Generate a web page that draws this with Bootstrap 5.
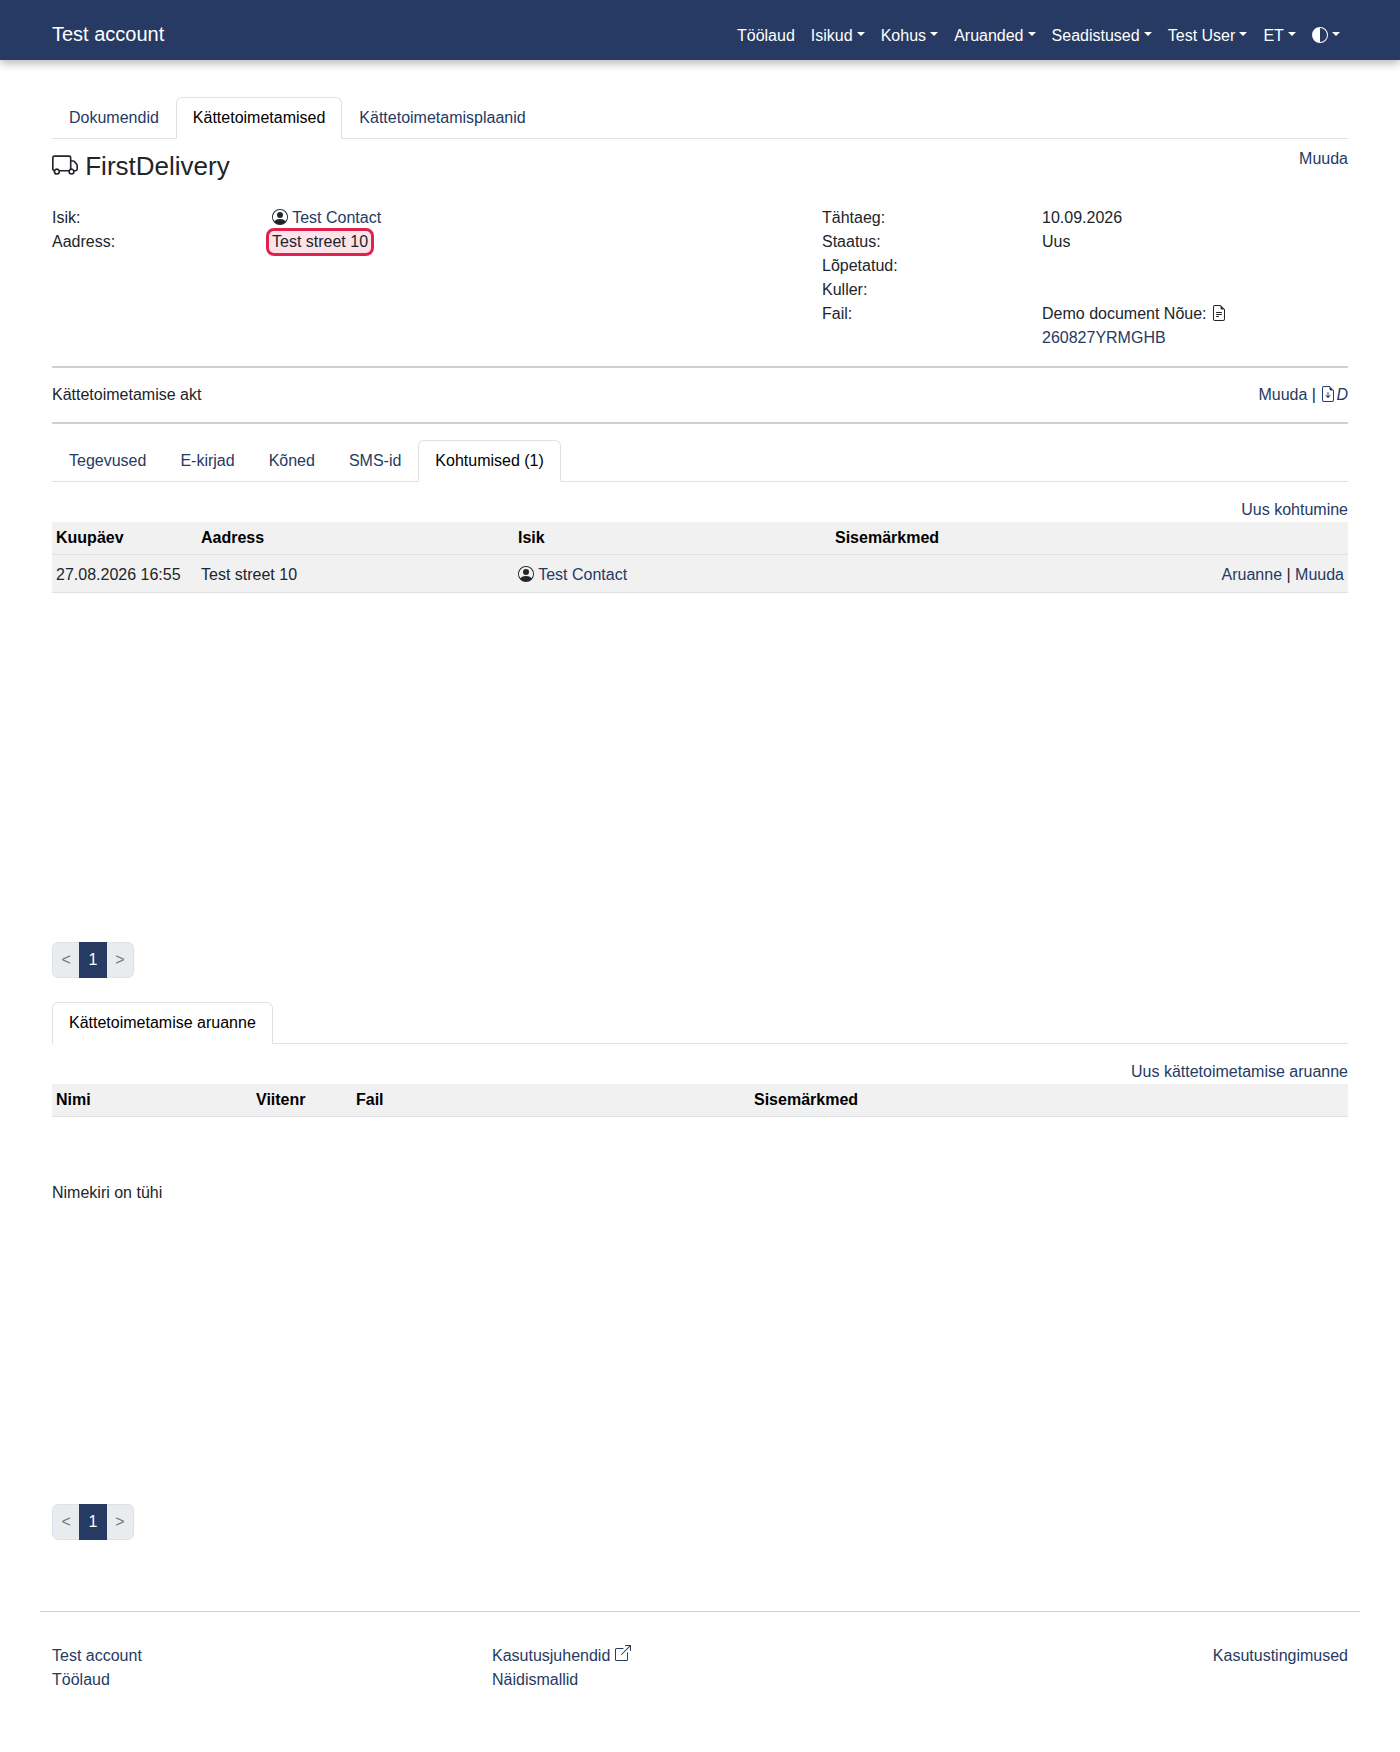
<!DOCTYPE html>
<html lang="et">
<head>
  <meta charset="UTF-8" />
  <meta name="viewport" content="width=device-width, initial-scale=1.0" />
  <title>FirstDelivery</title>
  <link href="https://cdn.jsdelivr.net/npm/bootstrap@5.3.0/dist/css/bootstrap.min.css" rel="stylesheet">
  <style>
    body {
      font-family: "Liberation Sans", Arial, sans-serif;
      font-size: 16px;
      color: #212529;
    }
    a { color: #263a63; text-decoration: none; }
    .top-nav {
      background-color: #263a63;
      height: 60px;
      padding: 0;
      box-shadow: 0 4px 8px rgba(0, 0, 0, .25);
    }
    .top-nav .container { padding-top: 7px; }
    .top-nav .navbar-brand { color: #fff; font-size: 20px; padding: 0; }
    .top-nav .nav-link { color: #fff; padding: 8px; line-height: 24px; }
    .top-nav .navbar-nav { margin-top: 4px; }
    .page-tabs { border-bottom-color: #dee2e6; }
    .page-tabs .nav-link { color: #263a63; padding: 8px 16px; }
    .page-tabs .nav-link.active { color: #000; }
    .first-tabs { margin-top: 37px; }
    .delivery-title { font-size: 26px; line-height: 34px; font-weight: 400; margin: 2px 0 0; }
    .delivery-head { height: 51px; padding-top: 8px; }
    .info-label { width: 220px; flex: none; }
    .info-row { display: flex; line-height: 24px; min-height: 24px; }
    .addr-mark {
      background: #fbe3e9;
      border: 3px solid #e0234e;
      border-radius: 8px;
      padding: 0 3px;
      margin-left: -6px;
      line-height: 22px;
      height: 28px;
      margin-top: -2px;
      margin-bottom: -2px;
    }
    .rule { border-top: 2px solid #cfcfcf; opacity: 1; margin: 0; }
    .act-row { height: 54px; }
    .data-grid { margin-bottom: 0; }
    .data-grid th, .data-grid td { padding: 4px; background: #f1f1f1; box-shadow: none; border-bottom: 1px solid #dee2e6; vertical-align: middle; }
    .data-grid th { height: 32px; color: #000; }
    .data-grid td { height: 38px; padding: 5px 4px 3px; }
    .list-holder { height: 420px; }
    .list-holder-empty { height: 387px; padding-top: 64px; }
    .action-line { height: 40px; padding-top: 16px; line-height: 24px; }
    .pager { margin: 0; }
    .pager .page-link { background: #e9ecef; color: #6c757d; padding: 6px 8.4px; line-height: 22px; border-color: #dee2e6; }
    .pager .page-item.active .page-link { background: #263a63; border-color: #263a63; color: #fff; }
    .foot-rule { border-top: 1px solid #cfcfcf; opacity: 1; margin: 71px 0 0; }
    .bi-icon { fill: currentColor; vertical-align: -.125em; }
    .bi-raised { vertical-align: 0; }
  </style>
</head>
<body>
  <nav class="navbar navbar-expand-lg top-nav">
    <div class="container">
      <a class="navbar-brand" href="#">Test account</a>
      <ul class="navbar-nav ms-auto flex-row">
        <li class="nav-item"><a class="nav-link" href="#">Töölaud</a></li>
        <li class="nav-item"><a class="nav-link dropdown-toggle" href="#">Isikud</a></li>
        <li class="nav-item"><a class="nav-link dropdown-toggle" href="#">Kohus</a></li>
        <li class="nav-item"><a class="nav-link dropdown-toggle" href="#">Aruanded</a></li>
        <li class="nav-item"><a class="nav-link dropdown-toggle" href="#">Seadistused</a></li>
        <li class="nav-item"><a class="nav-link dropdown-toggle" href="#">Test User</a></li>
        <li class="nav-item"><a class="nav-link dropdown-toggle" href="#">ET</a></li>
        <li class="nav-item">
          <a class="nav-link dropdown-toggle" href="#"><svg class="bi-icon" width="16" height="16" viewBox="0 0 16 16"><path d="M8 15A7 7 0 1 0 8 1v14zm0 1A8 8 0 1 1 8 0a8 8 0 0 1 0 16z"/></svg></a>
        </li>
      </ul>
    </div>
  </nav>

  <main class="container">
    <ul class="nav nav-tabs page-tabs first-tabs">
      <li class="nav-item"><a class="nav-link" href="#">Dokumendid</a></li>
      <li class="nav-item"><a class="nav-link active" href="#">Kättetoimetamised</a></li>
      <li class="nav-item"><a class="nav-link" href="#">Kättetoimetamisplaanid</a></li>
    </ul>

    <div class="d-flex justify-content-between delivery-head">
      <h1 class="delivery-title">
        <svg class="bi-icon" width="26" height="26" viewBox="0 0 16 16"><path d="M0 3.5A1.5 1.5 0 0 1 1.5 2h9A1.5 1.5 0 0 1 12 3.5V5h1.02a1.5 1.5 0 0 1 1.17.563l1.481 1.85a1.5 1.5 0 0 1 .329.938V10.5a1.5 1.5 0 0 1-1.5 1.5H14a2 2 0 1 1-4 0H5a2 2 0 1 1-3.998-.085A1.5 1.5 0 0 1 0 10.5v-7zm1.294 7.456A1.999 1.999 0 0 1 4.732 11h5.536a2.01 2.01 0 0 1 .732-.732V3.5a.5.5 0 0 0-.5-.5h-9a.5.5 0 0 0-.5.5v7a.5.5 0 0 0 .294.456zM12 10a2 2 0 0 1 1.732 1h.768a.5.5 0 0 0 .5-.5V8.35a.5.5 0 0 0-.11-.312l-1.48-1.85A.5.5 0 0 0 13.02 6H12v4zm-9 1a1 1 0 1 0 0 2 1 1 0 0 0 0-2zm9 0a1 1 0 1 0 0 2 1 1 0 0 0 0-2z"/></svg>
        FirstDelivery
      </h1>
      <a href="#">Muuda</a>
    </div>

    <div class="row mt-3 pb-3">
      <div class="col-7">
        <div class="info-row">
          <div class="info-label">Isik:</div>
          <div>
            <svg class="bi-icon" width="16" height="16" viewBox="0 0 16 16"><path d="M11 6a3 3 0 1 1-6 0 3 3 0 0 1 6 0z"/><path d="M0 8a8 8 0 1 1 16 0A8 8 0 0 1 0 8zm8-7a7 7 0 0 0-5.468 11.37C3.242 11.226 4.805 10 8 10s4.757 1.225 5.468 2.37A7 7 0 0 0 8 1z"/></svg>
            <a href="#">Test Contact</a>
          </div>
        </div>
        <div class="info-row">
          <div class="info-label">Aadress:</div>
          <div class="addr-mark">Test street 10</div>
        </div>
      </div>
      <div class="col-5">
        <div class="info-row"><div class="info-label">Tähtaeg:</div><div>10.09.2026</div></div>
        <div class="info-row"><div class="info-label">Staatus:</div><div>Uus</div></div>
        <div class="info-row"><div class="info-label">Lõpetatud:</div><div></div></div>
        <div class="info-row"><div class="info-label">Kuller:</div><div></div></div>
        <div class="info-row">
          <div class="info-label">Fail:</div>
          <div>
            Demo document Nõue:
            <svg class="bi-icon" width="16" height="16" viewBox="0 0 16 16"><path d="M5.5 7a.5.5 0 0 0 0 1h5a.5.5 0 0 0 0-1h-5zM5 9.5a.5.5 0 0 1 .5-.5h5a.5.5 0 0 1 0 1h-5a.5.5 0 0 1-.5-.5zm0 2a.5.5 0 0 1 .5-.5h2a.5.5 0 0 1 0 1h-2a.5.5 0 0 1-.5-.5z"/><path d="M9.5 0H4a2 2 0 0 0-2 2v12a2 2 0 0 0 2 2h8a2 2 0 0 0 2-2V4.5L9.5 0zm0 1v2A1.5 1.5 0 0 0 11 4.5h2V14a1 1 0 0 1-1 1H4a1 1 0 0 1-1-1V2a1 1 0 0 1 1-1h5.5z"/></svg>
            <br><a href="#">260827YRMGHB</a>
          </div>
        </div>
      </div>
    </div>

    <hr class="rule">
    <div class="d-flex justify-content-between align-items-center act-row">
      <span>Kättetoimetamise akt</span>
      <span>
        <a href="#">Muuda</a> |
        <a href="#"><svg class="bi-icon" width="16" height="16" viewBox="0 0 16 16"><path d="M8.5 6.5a.5.5 0 0 0-1 0v3.793L6.354 9.146a.5.5 0 1 0-.708.708l2 2a.5.5 0 0 0 .708 0l2-2a.5.5 0 0 0-.708-.708L8.5 10.293V6.5z"/><path d="M14 14V4.5L9.5 0H4a2 2 0 0 0-2 2v12a2 2 0 0 0 2 2h8a2 2 0 0 0 2-2zM9.5 3A1.5 1.5 0 0 0 11 4.5h2V14a1 1 0 0 1-1 1H4a1 1 0 0 1-1-1V2a1 1 0 0 1 1-1h5.5v2z"/></svg><em>D</em></a>
      </span>
    </div>
    <hr class="rule">

    <ul class="nav nav-tabs page-tabs mt-3">
      <li class="nav-item"><a class="nav-link" href="#">Tegevused</a></li>
      <li class="nav-item"><a class="nav-link" href="#">E-kirjad</a></li>
      <li class="nav-item"><a class="nav-link" href="#">Kõned</a></li>
      <li class="nav-item"><a class="nav-link" href="#">SMS-id</a></li>
      <li class="nav-item"><a class="nav-link active" href="#">Kohtumised (1)</a></li>
    </ul>
    <div class="text-end action-line"><a href="#">Uus kohtumine</a></div>

    <div class="list-holder">
      <table class="table data-grid">
        <thead>
          <tr>
            <th style="width: 145px">Kuupäev</th>
            <th style="width: 317px">Aadress</th>
            <th style="width: 317px">Isik</th>
            <th>Sisemärkmed</th>
            <th></th>
          </tr>
        </thead>
        <tbody>
          <tr>
            <td>27.08.2026 16:55</td>
            <td>Test street 10</td>
            <td>
              <svg class="bi-icon" width="16" height="16" viewBox="0 0 16 16"><path d="M11 6a3 3 0 1 1-6 0 3 3 0 0 1 6 0z"/><path d="M0 8a8 8 0 1 1 16 0A8 8 0 0 1 0 8zm8-7a7 7 0 0 0-5.468 11.37C3.242 11.226 4.805 10 8 10s4.757 1.225 5.468 2.37A7 7 0 0 0 8 1z"/></svg>
              <a href="#">Test Contact</a>
            </td>
            <td></td>
            <td class="text-end"><a href="#">Aruanne</a> | <a href="#">Muuda</a></td>
          </tr>
        </tbody>
      </table>
    </div>

    <ul class="pagination pager">
      <li class="page-item"><a class="page-link" href="#">&lt;</a></li>
      <li class="page-item active"><a class="page-link" href="#">1</a></li>
      <li class="page-item"><a class="page-link" href="#">&gt;</a></li>
    </ul>

    <ul class="nav nav-tabs page-tabs mt-4">
      <li class="nav-item"><a class="nav-link active" href="#">Kättetoimetamise aruanne</a></li>
    </ul>
    <div class="text-end action-line"><a href="#">Uus kättetoimetamise aruanne</a></div>

    <table class="table data-grid">
      <thead>
        <tr>
          <th style="width: 200px">Nimi</th>
          <th style="width: 100px">Viitenr</th>
          <th style="width: 398px">Fail</th>
          <th>Sisemärkmed</th>
        </tr>
      </thead>
    </table>
    <div class="list-holder-empty">Nimekiri on tühi</div>

    <ul class="pagination pager">
      <li class="page-item"><a class="page-link" href="#">&lt;</a></li>
      <li class="page-item active"><a class="page-link" href="#">1</a></li>
      <li class="page-item"><a class="page-link" href="#">&gt;</a></li>
    </ul>
  </main>

  <div class="container px-0">
    <hr class="foot-rule">
  </div>
  <footer class="container pt-4 pb-5">
    <div class="row pt-2">
      <div class="col-4">
        <div><a href="#">Test account</a></div>
        <div><a href="#">Töölaud</a></div>
      </div>
      <div class="col-4">
        <div>
          <a href="#">Kasutusjuhendid
            <svg class="bi-icon bi-raised" width="16" height="16" viewBox="0 0 16 16"><path d="M8.636 3.5a.5.5 0 0 0-.5-.5H1.5A1.5 1.5 0 0 0 0 4.5v10A1.5 1.5 0 0 0 1.5 16h10a1.5 1.5 0 0 0 1.5-1.5V7.864a.5.5 0 0 0-1 0V14.5a.5.5 0 0 1-.5.5h-10a.5.5 0 0 1-.5-.5v-10a.5.5 0 0 1 .5-.5h6.636a.5.5 0 0 0 .5-.5z"/><path d="M16 .5a.5.5 0 0 0-.5-.5h-5a.5.5 0 0 0 0 1h3.793L6.146 9.146a.5.5 0 1 0 .708.708L15 1.707V5.5a.5.5 0 0 0 1 0v-5z"/></svg>
          </a>
        </div>
        <div><a href="#">Näidismallid</a></div>
      </div>
      <div class="col-4 text-end"><a href="#">Kasutustingimused</a></div>
    </div>
  </footer>
  <script src="https://cdn.jsdelivr.net/npm/bootstrap@5.3.0/dist/js/bootstrap.bundle.min.js"></script>
</body>
</html>
